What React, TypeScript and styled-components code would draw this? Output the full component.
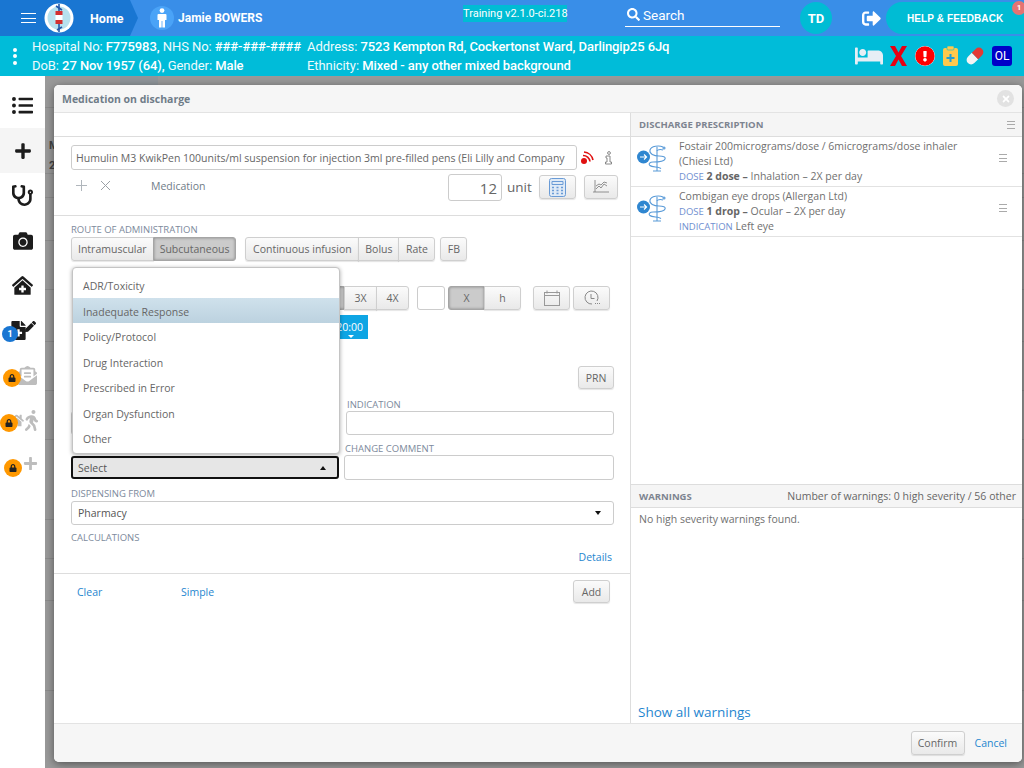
import React from 'react';
import styled, { createGlobalStyle } from 'styled-components';
import {
  FaBed, FaCamera, FaClinicMedical, FaEnvelopeOpenText, FaExclamationCircle, FaFileMedical, FaHome,
  FaListUl, FaLock, FaPen, FaPlus, FaSearch, FaSignOutAlt, FaStethoscope, FaTimes, FaWalking,
} from 'react-icons/fa';

const Global = createGlobalStyle`
  html, body { margin: 0; padding: 0; height: 100%; overflow: hidden; background: #999; }
  * { box-sizing: border-box; }
  #root { height: 768px; }
`;

const Page = styled.div`
  width: 1024px; height: 768px; display: flex; flex-direction: column; position: relative; overflow: hidden;
  font-family: 'Open Sans', sans-serif;
`;

/* ---------- top bar ---------- */
const TopBar = styled.header`
  height: 36px; background: #398ee8; display: flex; align-items: center; color: #fff; flex: none;
  font-family: Roboto, sans-serif;
`;
const HomeCrumb = styled.div`
  width: 138px; height: 36px; background: #1976d2; display: flex; align-items: center; flex: none;
  clip-path: polygon(0 0, 130px 0, 138px 50%, 130px 100%, 0 100%);
`;
const Burger = styled.div`
  width: 15px; height: 10px; margin-left: 21px; border-top: 1px solid #fff; border-bottom: 1px solid #fff; position: relative;
  &::after { content: ''; position: absolute; left: 0; right: 0; top: 3.5px; height: 1px; background: #fff; }
`;
const Logo = styled.svg`width: 30px; height: 30px; margin-left: 8px; flex: none;`;
const HomeText = styled.span`font-size: 12.5px; font-weight: 700; margin-left: 16px;`;
const PersonDisc = styled.div`
  width: 24px; height: 24px; border-radius: 50%; background: #4aa3f7; margin-left: 12px; display: flex; align-items: center; justify-content: center; flex: none;
`;
const PatientName = styled.span`font-size: 12px; font-weight: 700; margin-left: 4px; width: 285px; flex: none;`;
const BuildChip = styled.div`
  background: #00bcd4; color: #fff; font-size: 11px; line-height: 17px; height: 17px; width: 104px; text-align: center; margin-top: -9px; flex: none; white-space: nowrap;
`;
const SearchBox = styled.div`
  width: 155px; height: 22px; margin: -5px 0 0 58px; border-bottom: 1px solid #fff; display: flex; align-items: center; gap: 3px; padding: 0 0 1px 2px; font-size: 13.5px; flex: none;
`;
const Avatar = styled.div`
  width: 32px; height: 32px; border-radius: 50%; background: #00bcd4; margin-left: 20px; display: flex; align-items: center; justify-content: center; font-size: 13px; font-weight: 700; flex: none;
`;
const LogoutIcon = styled.div`margin-left: 30px; width: 20px; display: flex; flex: none;`;
const HelpButton = styled.div`
  width: 138px; height: 32px; margin-left: 4px; background: #00bcd4; border-radius: 16px 0 0 16px; position: relative; display: flex; align-items: center; padding-left: 21px;
  font: 700 10px 'Liberation Sans', sans-serif; letter-spacing: .1px; white-space: nowrap; flex: none;
`;
const HelpBadge = styled.span`
  position: absolute; right: -2px; top: -1px; width: 14px; height: 14px; border-radius: 50%; background: #e57373; font: 700 8px/14px Roboto, sans-serif; text-align: center;
`;

/* ---------- patient banner ---------- */
const Banner = styled.div`
  height: 40px; background: #00bcd9; color: #eefbfd; display: flex; flex: none; font-family: Roboto, sans-serif; font-size: 13px; position: relative;
`;
const Kebab = styled.div`
  width: 32px; display: flex; flex-direction: column; align-items: center; justify-content: center; gap: 2.5px; padding-right: 2px;
`;
const KebabDot = styled.i`width: 4px; height: 4px; border-radius: 50%; background: #fff; display: block;`;
const BannerCol = styled.div<{ $w: number }>`
  width: ${p => p.$w}px; display: flex; flex-direction: column; padding-top: 1px; flex: none; white-space: nowrap;
`;
const BannerLine = styled.div`height: 19px; line-height: 19px; letter-spacing: -.07px; b { font-weight: 500; color: #fff; }`;
const BannerIcons = styled.div`
  margin-left: auto; padding-right: 12px; display: flex; align-items: center; gap: 7px;
`;
const OlBox = styled.div`
  width: 20px; height: 20px; border-radius: 3px; background: #0000c8; color: #fff; font-size: 12px; text-align: center; line-height: 20px;
`;

/* ---------- side + backdrop ---------- */
const Main = styled.div`flex: 1; display: flex; min-height: 0;`;
const Sidebar = styled.nav`
  width: 45px; background: #fff; padding-top: 7px; flex: none; display: flex; flex-direction: column;
`;
const SideItem = styled.div<{ $active?: boolean; $muted?: boolean }>`
  height: 45px; display: flex; align-items: center; justify-content: center; position: relative; flex: none;
  color: ${p => (p.$muted ? '#bdbdbd' : '#1c1c1c')};
  background: ${p => (p.$active ? '#f5f5f5' : 'transparent')};
`;
const CountBadge = styled.span`
  position: absolute; left: 2px; top: 18px; width: 16px; height: 16px; border-radius: 50%; background: #1976d2; color: #fff; font: 700 9px/16px Roboto, sans-serif; text-align: center;
`;
const LockBadge = styled.span<{ $left: number; $top: number }>`
  position: absolute; left: ${p => p.$left}px; top: ${p => p.$top}px; width: 18px; height: 18px; border-radius: 50%; background: #ff9800; color: #222; display: flex; align-items: center; justify-content: center;
`;
const Backdrop = styled.div`
  flex: 1; background: #999; display: flex; flex-direction: column; color: #444; font: 700 11px Roboto, sans-serif;
`;
const BackTab = styled.div`width: 38px; height: 9px; margin-left: 75px; background: #8f959a; flex: none;`;
const BackRow = styled.div<{ $h: number; $text?: boolean }>`
  height: ${p => p.$h}px; border-bottom: 1px solid #8b8b8b; flex: none; padding: ${p => (p.$text ? '28px' : '0')} 0 0 4px; line-height: 20px;
`;

/* ---------- modal ---------- */
const Modal = styled.section`
  position: absolute; left: 54px; top: 85px; width: 968px; height: 677px; background: #fff; border-radius: 5px; overflow: hidden;
  box-shadow: 0 2px 8px rgba(0,0,0,.45); display: flex; flex-direction: column; color: #666; font-size: 10.5px;
`;
const ModalTitle = styled.div`
  height: 28px; flex: none; background: #f6f6f6; border-bottom: 1px solid #e3e3e3; display: flex; align-items: center; justify-content: space-between; padding: 0 8px;
  font-weight: 700; font-size: 10.5px; color: #6f7c88;
`;
const CloseDisc = styled.div`
  width: 17px; height: 17px; border-radius: 50%; background: #e2e2e2; color: #fff; display: flex; align-items: center; justify-content: center;
`;
const ModalBody = styled.div`flex: 1; display: flex; min-height: 0;`;
const LeftPane = styled.div`width: 576px; display: flex; flex-direction: column; flex: none;`;
const RightPane = styled.div`flex: 1; border-left: 1px solid #ddd; display: flex; flex-direction: column; min-width: 0;`;

const LeftHead = styled.div`height: 24px; border-bottom: 1px solid #ddd; flex: none;`;
const DrugSection = styled.div`height: 79px; border-bottom: 1px solid #ddd; padding: 8px 12px 0 17px; flex: none;`;
const DrugRow = styled.div`display: flex; align-items: center;`;
const TextField = styled.input<{ $w?: number; $h?: number; $right?: boolean; $size?: number }>`
  width: ${p => (p.$w ? `${p.$w}px` : '100%')}; height: ${p => p.$h ?? 24}px; border: 1px solid #ccc; border-radius: 3px; background: #fff; color: #666;
  font: ${p => p.$size ?? 10.5}px 'Open Sans', sans-serif; padding: 0 4px; outline: none; text-align: ${p => (p.$right ? 'right' : 'left')};
  flex: none;
`;
const DoseRow = styled.div`display: flex; align-items: flex-start; margin-top: 4px; height: 30px;`;
const GreyGlyphs = styled.div`display: flex; gap: 13px; width: 80px; padding: 6px 0 0 5px; flex: none;`;
const MedLabel = styled.span`flex: 1; padding-top: 5px; color: #6f7c88;`;
const UnitText = styled.span`font-size: 13.5px; color: #666; margin: 0 7px 0 5px; line-height: 27px; width: 25px;`;

const Btn = styled.div<{ $on?: boolean; $w?: number; $h?: number }>`
  height: ${p => p.$h ?? 24}px; ${p => (p.$w ? `width: ${p.$w}px;` : 'padding: 0 6px;')}
  display: flex; align-items: center; justify-content: center; flex: none; color: #666; font-size: 10.5px; white-space: nowrap;
  border: 1px solid ${p => (p.$on ? '#a5a5a5' : '#cfcfcf')}; border-radius: 3px;
  background: ${p => (p.$on ? '#cbcbcb' : 'linear-gradient(#fbfbfb, #e9e9e9)')};
  box-shadow: ${p => (p.$on ? 'inset 0 0 3px rgba(0,0,0,.35)' : '0 1px 1px rgba(0,0,0,.1)')};
`;
const BtnGroup = styled.div<{ $ml?: number }>`
  display: flex; margin-left: ${p => p.$ml ?? 0}px; flex: none;
  & > * { border-radius: 0; margin-left: -1px; }
  & > *:first-child { border-radius: 3px 0 0 3px; margin-left: 0; }
  & > *:last-child { border-radius: 0 3px 3px 0; }
`;

const FormSection = styled.div`padding: 7px 16px 0 17px; flex: 1; position: relative;`;
const FieldLabel = styled.div<{ $ml?: number }>`
  font-size: 9.5px; line-height: 13px; color: #7d8a9c; text-transform: uppercase; height: 13px; margin-left: ${p => p.$ml ?? 0}px; white-space: nowrap;
`;
const Row = styled.div<{ $mt?: number }>`display: flex; align-items: center; margin-top: ${p => p.$mt ?? 0}px;`;
const TimeChip = styled.div`
  margin-left: 237px; width: 60px; height: 24px; background: #0ea5e4; color: #fff; font-size: 10.5px; text-align: right; padding-right: 5px; line-height: 24px; position: relative;
  &::after { content: ''; position: absolute; right: 14px; bottom: 1px; border: 3px solid transparent; border-top-color: #fff; border-bottom: 0; }
`;
const TwoCol = styled.div<{ $mt?: number }>`
  display: grid; grid-template-columns: 268px 270px; column-gap: 5px; margin-top: ${p => p.$mt ?? 0}px; align-items: end;
`;
const SelectBox = styled.div<{ $open?: boolean }>`
  height: ${p => (p.$open ? 23 : 24)}px; border-radius: 3px; display: flex; align-items: center; justify-content: space-between; padding: 0 ${p => (p.$open ? 5 : 6)}px;
  color: #555; font-size: 10.5px;
  margin-bottom: ${p => (p.$open ? 1 : 0)}px;
  border: ${p => (p.$open ? '2px solid #111' : '1px solid #ccc')};
  background: ${p => (p.$open ? '#e6e6e6' : '#fff')};
`;
const Caret = styled.i<{ $up?: boolean }>`
  width: 0; height: 0; border-left: 3.5px solid transparent; border-right: 3.5px solid transparent; margin-right: 6px;
  ${p => (p.$up ? 'border-bottom: 4px solid #111;' : 'border-top: 4px solid #111;')}
`;
const Menu = styled.ul`
  position: absolute; left: 18px; top: 51px; width: 268px; height: 187px; margin: 0; padding: 4px 0 0; list-style: none; background: #fff; border: 1px solid #c4c4c4; border-radius: 4px;
  box-shadow: 0 1px 4px rgba(0,0,0,.35); z-index: 5;
`;
const MenuItem = styled.li<{ $hot?: boolean }>`
  height: 25.5px; line-height: 28px; padding-left: 10px; color: #666; font-size: 10.5px;
  background: ${p => (p.$hot ? 'linear-gradient(#cfe1ec, #bcd2df)' : 'transparent')};
`;
const LinkText = styled.a<{ $size?: number }>`color: #1f86cf; font-size: ${p => p.$size ?? 10.5}px; text-decoration: none;`;
const DetailsRow = styled.div`display: flex; justify-content: flex-end; margin-top: 6px; padding-right: 2px; line-height: 14px;`;
const ActionRow = styled.div`
  height: 150px; flex: none; border-top: 1px solid #ddd; display: flex; padding: 6px 20px 0 23px; align-items: flex-start; gap: 0;
`;
const ActionLink = styled.div<{ $w: number }>`width: ${p => p.$w}px; padding-top: 5px; flex: none;`;

const PaneHead = styled.div`
  height: 24px; flex: none; background: #f5f5f5; border-bottom: 1px solid #ddd; display: flex; align-items: center; justify-content: space-between; padding: 0 7px 0 8px;
  font-size: 9.5px; font-weight: 700; color: #7d8490;
`;
const RxList = styled.div`flex: 1; min-height: 0;`;
const RxRow = styled.div`
  height: 50px; border-bottom: 1px solid #e2e2e2; display: flex; padding: 0 15px 0 5px; position: relative;
`;
const RxIcon = styled.svg`width: 32px; height: 30px; margin-top: 7px; flex: none;`;
const RxText = styled.div`
  flex: 1; padding: 2px 27px 0 11px; line-height: 15px; font-size: 10.5px; color: #707070;
  b { color: #666; font-weight: 700; }
`;
const RxKey = styled.span`color: #6f8fd0; font-size: 9.5px;`;
const Menu3 = styled.div`
  width: 8px; height: 8px; flex: none; margin-top: 17px; border-top: 1px solid #aaa; border-bottom: 1px solid #aaa; position: relative;
  &::after { content: ''; position: absolute; left: 0; right: 0; top: 2.5px; height: 1px; background: #aaa; }
`;
const WarnPane = styled.div`height: 239px; flex: none; display: flex; flex-direction: column;`;
const WarnHead = styled(PaneHead)`border-top: 1px solid #ddd; padding-right: 6px;`;
const WarnCount = styled.span`font-weight: 400; font-size: 10.5px; color: #666; letter-spacing: .03px;`;
const WarnBody = styled.div`flex: 1; padding: 4px 8px; color: #707070; font-size: 10.5px;`;
const ShowAll = styled.div`padding: 0 0 1px 7px; line-height: 18px;`;
const ModalFoot = styled.div`
  height: 39px; flex: none; background: #f6f6f6; border-top: 1px solid #e3e3e3; display: flex; align-items: center; justify-content: flex-end; padding: 0 15px 0 0; gap: 10px;
`;

const Person = () => (
  <svg width="10" height="20" viewBox="0 0 10 20" fill="#fff">
    <circle cx="5" cy="2.6" r="2.4" /><path d="M1.5 6h7a1 1 0 0 1 1 1v5H8v7.5H5.4V13h-.8v6.5H2V12H.5V7a1 1 0 0 1 1-1z" />
  </svg>
);

const Rod = () => (
  <RxIcon viewBox="0 0 32 30" fill="none">
    <g stroke="#5a9bd8" strokeWidth="1.1">
      <path d="M21 3v24M17 27h8" />
      <path d="M27 3c-4-2-12-1-13 3-1 4 4 6 9 6 4 0 7 1 6 3-1 3-8 3-12 3-3 0-5 2-3 3.500 2 2 9 1 11 3" />
      <path d="M27 6c-3-1-6 0-6 1" />
      <circle cx="28" cy="4" r="1" />
    </g>
    <circle cx="7.500" cy="13" r="6.500" fill="#2f86d0" />
    <path d="M4 13h6.500M8 10.500l2.600 2.500L8 15.500" stroke="#fff" strokeWidth="1.100" />
  </RxIcon>
);

const rows = [23, 66, 24, 43, 49, 52, 49, 49, 80, 39, 42, 90];

const App: React.FC = () => (
  <Page>
    <Global />
    <TopBar>
      <HomeCrumb>
        <Burger />
        <Logo viewBox="0 0 30 30">
          <circle cx="15" cy="15" r="14.5" fill="#fff" />
          <circle cx="15" cy="15" r="11.5" fill="#b7e1ee" />
          <path d="M15 1v28" stroke="#2458a8" strokeWidth="1.6" />
          <path d="M11.5 8h7v4h-7zM11.5 17h7v4h-7z" fill="#d32f2f" />
          <path d="M11.5 12h7v5h-7z" fill="#fff" />
          <path d="M12 3l6 4M18 24l-5 3" stroke="#2458a8" strokeWidth="1.6" />
        </Logo>
        <HomeText>Home</HomeText>
      </HomeCrumb>
      <PersonDisc><Person /></PersonDisc>
      <PatientName>Jamie BOWERS</PatientName>
      <BuildChip>Training v2.1.0-ci.218</BuildChip>
      <SearchBox><FaSearch size={13} />Search</SearchBox>
      <Avatar>TD</Avatar>
      <LogoutIcon><FaSignOutAlt size={19} /></LogoutIcon>
      <HelpButton>HELP &amp; FEEDBACK<HelpBadge>1</HelpBadge></HelpButton>
    </TopBar>

    <Banner>
      <Kebab><KebabDot /><KebabDot /><KebabDot /></Kebab>
      <BannerCol $w={275}>
        <BannerLine>Hospital No: <b>F775983,</b> NHS No: <b>###-###-####</b></BannerLine>
        <BannerLine>DoB: <b>27 Nov 1957 (64),</b> Gender: <b>Male</b></BannerLine>
      </BannerCol>
      <BannerCol $w={400}>
        <BannerLine>Address: <b>7523 Kempton Rd, Cockertonst Ward, Darlingip25 6Jq</b></BannerLine>
        <BannerLine>Ethnicity: <b>Mixed - any other mixed background</b></BannerLine>
      </BannerCol>
      <BannerIcons>
        <FaBed size={28} color="#e6eef5" />
        <svg width="17" height="20" viewBox="0 0 17 20">
          <path d="M0 0h5l3.500 6.500L12 0h5l-6 10 6 10h-5l-3.500-6.500L5 20H0l6-10z" fill="#e60012" />
        </svg>
        <FaExclamationCircle size={20} color="#f00" style={{ background: '#fff', borderRadius: '50%', margin: '0 1px' }} />
        <svg width="15" height="20" viewBox="0 0 15 20">
          <rect y="2" width="15" height="18" rx="2" fill="#ffc94d" />
          <rect x="4" y="0" width="7" height="4" rx="1" fill="#ffc94d" stroke="#00bcd9" strokeWidth=".6" />
          <path d="M7.500 8v8M3.500 12h8" stroke="#1f9fd8" strokeWidth="2" />
        </svg>
        <svg width="20" height="20" viewBox="0 0 20 20">
          <g transform="rotate(-45 10 10)">
            <path d="M4.500 5.500H10v9H4.500a4.500 4.500 0 0 1 0-9z" fill="#f4f4f4" />
            <path d="M10 5.500h5.500a4.500 4.500 0 0 1 0 9H10z" fill="#e53935" />
          </g>
        </svg>
        <OlBox>OL</OlBox>
      </BannerIcons>
    </Banner>

    <Main>
      <Sidebar>
        <SideItem><FaListUl size={21} /></SideItem>
        <SideItem $active><FaPlus size={18} /></SideItem>
        <SideItem><FaStethoscope size={21} /></SideItem>
        <SideItem><FaCamera size={20} /></SideItem>
        <SideItem><FaClinicMedical size={21} /></SideItem>
        <SideItem>
          <FaFileMedical size={19} /><FaPen size={11} style={{ marginLeft: -3, marginTop: -8 }} />
          <CountBadge>1</CountBadge>
        </SideItem>
        <SideItem $muted>
          <FaEnvelopeOpenText size={19} style={{ marginLeft: 10 }} />
          <LockBadge $left={3} $top={16}><FaLock size={8} /></LockBadge>
        </SideItem>
        <SideItem $muted>
          <FaHome size={15} style={{ marginLeft: 6 }} /><FaWalking size={21} style={{ marginLeft: -3 }} />
          <LockBadge $left={0} $top={16}><FaLock size={8} /></LockBadge>
        </SideItem>
        <SideItem $muted>
          <FaPlus size={15} style={{ marginLeft: 16, marginTop: -5 }} />
          <LockBadge $left={4} $top={16}><FaLock size={8} /></LockBadge>
        </SideItem>
      </Sidebar>
      <Backdrop>
        <BackTab />
        {rows.map((h, i) => (
          <BackRow key={i} $h={h} $text={i === 1}>{i === 1 ? <>M<br />2</> : null}</BackRow>
        ))}
      </Backdrop>
    </Main>

    <Modal>
      <ModalTitle>
        Medication on discharge
        <CloseDisc><FaTimes size={10} /></CloseDisc>
      </ModalTitle>
      <ModalBody>
        <LeftPane>
          <LeftHead />
          <DrugSection>
            <DrugRow>
              <TextField $w={506} $h={25} readOnly value="Humulin M3 KwikPen 100units/ml suspension for injection 3ml pre-filled pens (Eli Lilly and Company" />
              <svg width="14" height="14" viewBox="0 0 14 14" fill="none" style={{ marginLeft: 3 }}>
                <circle cx="4" cy="10" r="3" fill="#e01010" />
                <path d="M3 4.500a7 7 0 0 1 7 6M4 1a10 10 0 0 1 9 8" stroke="#e01010" strokeWidth="1.6" />
              </svg>
              <svg width="10" height="14" viewBox="0 0 10 14" fill="none" stroke="#888" strokeWidth="1" style={{ marginLeft: 9 }}>
                <circle cx="6" cy="2" r="1.4" /><path d="M3 5h4v6h1.500v2h-6v-2H4V7H3z" />
              </svg>
            </DrugRow>
            <DoseRow>
              <GreyGlyphs>
                <svg width="11" height="11" viewBox="0 0 11 11" stroke="#b0b6bc"><path d="M5.500 0v11M0 5.500h11" /></svg>
                <svg width="11" height="11" viewBox="0 0 11 11" stroke="#9aa0a6"><path d="M1 1l9 9M10 1l-9 9" /></svg>
              </GreyGlyphs>
              <MedLabel>Medication</MedLabel>
              <TextField $w={54} $h={27} $right $size={15} readOnly value="12" />
              <UnitText>unit</UnitText>
              <Btn $w={37} $h={24} style={{ marginTop: 1 }}>
                <svg width="17" height="19" viewBox="0 0 17 19" fill="none" stroke="#6a9bd6">
                  <rect x=".5" y=".5" width="16" height="18" rx="2" fill="#dfeaf6" />
                  <path d="M3 3.500h11v3H3z" />
                  <path d="M3 9.500h2M7.500 9.500h2M12 9.500h2M3 12.500h2M7.500 12.500h2M12 12.500h2M3 15.500h2M7.500 15.500h2M12 15.500h2" strokeWidth="1.6" />
                </svg>
              </Btn>
              <Btn $w={34} $h={24} style={{ marginLeft: 8, marginTop: 1 }}>
                <svg width="16" height="14" viewBox="0 0 16 14" fill="none" stroke="#777" strokeWidth=".8">
                  <path d="M2 0v12M0 12h16M3 9l3-3 2 2 3-4 3 2M3 6l3-2 2 1 3-3 3 1" />
                </svg>
              </Btn>
            </DoseRow>
          </DrugSection>
          <FormSection>
            <FieldLabel>Route of administration</FieldLabel>
            <Row $mt={1}>
              <BtnGroup>
                <Btn>Intramuscular</Btn>
                <Btn $on>Subcutaneous</Btn>
              </BtnGroup>
              <BtnGroup $ml={9}>
                <Btn $w={114}>Continuous infusion</Btn>
                <Btn $w={41}>Bolus</Btn>
                <Btn $w={37}>Rate</Btn>
              </BtnGroup>
              <Btn $w={27} style={{ marginLeft: 5 }}>FB</Btn>
            </Row>
            <Row $mt={25}>
              <BtnGroup $ml={210}>
                <Btn $w={32} $h={24}>1X</Btn>
                <Btn $on $w={33} $h={24}>2X</Btn>
                <Btn $w={33} $h={24}>3X</Btn>
                <Btn $w={33} $h={24}>4X</Btn>
              </BtnGroup>
              <TextField $w={28} readOnly value="" style={{ marginLeft: 8 }} />
              <BtnGroup $ml={3}>
                <Btn $on $w={37}>X</Btn>
                <Btn $w={37}>h</Btn>
              </BtnGroup>
              <Btn $w={37} style={{ marginLeft: 12 }}>
                <svg width="16" height="16" viewBox="0 0 16 16" fill="none" stroke="#999">
                  <rect x=".5" y="2.500" width="15" height="13" /><path d="M.5 5.500h15M3 .5v3M13 .5v3" />
                </svg>
              </Btn>
              <Btn $w={37} style={{ marginLeft: 3 }}>
                <svg width="16" height="16" viewBox="0 0 16 16" fill="none" stroke="#888">
                  <path d="M13 11A6.500 6.500 0 1 0 8 14M7 4v4.500h3.500M11 13.500h1M13 13.500h1M15 13.500h1" />
                </svg>
              </Btn>
            </Row>
            <Row $mt={5}><TimeChip>20:00</TimeChip></Row>
            <Row $mt={27} style={{ justifyContent: 'flex-end' }}><Btn $w={36} $h={23}>PRN</Btn></Row>
            <TwoCol $mt={9}>
              <div><TextField readOnly value="" /></div>
              <div>
                <FieldLabel $ml={3}>Indication</FieldLabel>
                <TextField $w={268} readOnly value="" style={{ marginLeft: 2, display: 'block' }} />
              </div>
            </TwoCol>
            <TwoCol $mt={7}>
              <SelectBox $open>Select<Caret $up /></SelectBox>
              <div>
                <FieldLabel $ml={1}>Change comment</FieldLabel>
                <TextField $w={270} $h={25} readOnly value="" style={{ display: 'block' }} />
              </div>
            </TwoCol>
            <FieldLabel style={{ marginTop: 7 }}>Dispensing from</FieldLabel>
            <SelectBox style={{ marginTop: 1 }}>Pharmacy<Caret /></SelectBox>
            <FieldLabel style={{ marginTop: 6 }}>Calculations</FieldLabel>
            <DetailsRow><LinkText>Details</LinkText></DetailsRow>
            <Menu>
              <MenuItem>ADR/Toxicity</MenuItem>
              <MenuItem $hot>Inadequate Response</MenuItem>
              <MenuItem>Policy/Protocol</MenuItem>
              <MenuItem>Drug Interaction</MenuItem>
              <MenuItem>Prescribed in Error</MenuItem>
              <MenuItem>Organ Dysfunction</MenuItem>
              <MenuItem>Other</MenuItem>
            </Menu>
          </FormSection>
          <ActionRow>
            <ActionLink $w={104}><LinkText>Clear</LinkText></ActionLink>
            <ActionLink $w={392}><LinkText>Simple</LinkText></ActionLink>
            <Btn $w={37} $h={23}>Add</Btn>
          </ActionRow>
        </LeftPane>
        <RightPane>
          <PaneHead>
            DISCHARGE PRESCRIPTION
            <Menu3 style={{ marginTop: 0 }} />
          </PaneHead>
          <RxList>
            <RxRow>
              <Rod />
              <RxText>
                Fostair 200micrograms/dose / 6micrograms/dose inhaler (Chiesi Ltd)<br />
                <RxKey>DOSE</RxKey> <b>2 dose –</b> Inhalation – 2X per day
              </RxText>
              <Menu3 />
            </RxRow>
            <RxRow>
              <Rod />
              <RxText>
                Combigan eye drops (Allergan Ltd)<br />
                <RxKey>DOSE</RxKey> <b>1 drop –</b> Ocular – 2X per day<br />
                <RxKey>INDICATION</RxKey> Left eye
              </RxText>
              <Menu3 />
            </RxRow>
          </RxList>
          <WarnPane>
            <WarnHead>WARNINGS<WarnCount>Number of warnings: 0 high severity / 56 other</WarnCount></WarnHead>
            <WarnBody>No high severity warnings found.</WarnBody>
            <ShowAll><LinkText $size={13.5}>Show all warnings</LinkText></ShowAll>
          </WarnPane>
        </RightPane>
      </ModalBody>
      <ModalFoot>
        <Btn $w={54}>Confirm</Btn>
        <LinkText>Cancel</LinkText>
      </ModalFoot>
    </Modal>
  </Page>
);

export default App;
